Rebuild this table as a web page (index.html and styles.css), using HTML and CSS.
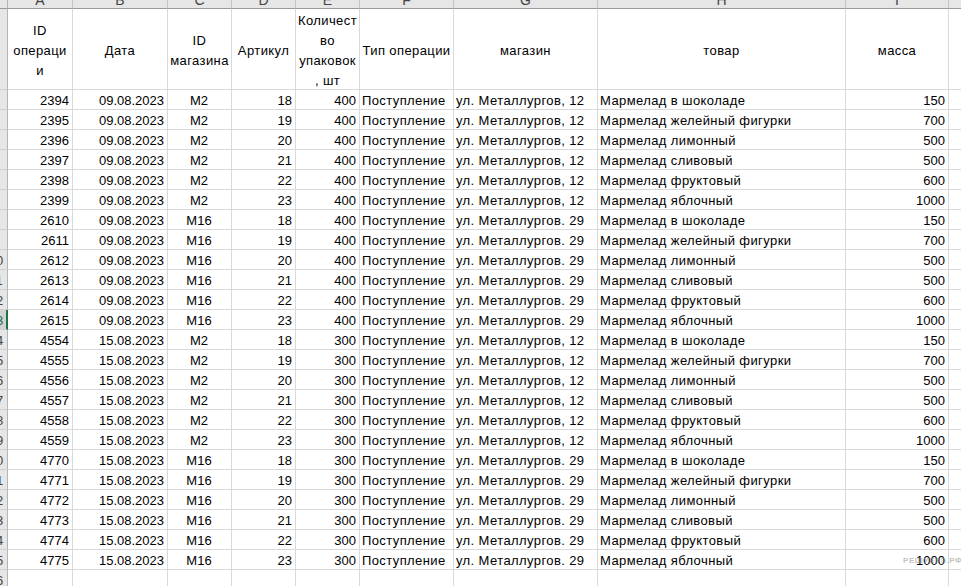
FILE: index.html
```html
<!DOCTYPE html>
<html lang="ru">
<head>
<meta charset="utf-8">
<title>Лист</title>
<link rel="stylesheet" href="styles.css">
</head>
<body>
<div class="sheet">
  <div class="row colhead">
    <div class="corner"></div>
    <div class="ch"><span>A</span></div>
    <div class="ch"><span>B</span></div>
    <div class="ch"><span>C</span></div>
    <div class="ch"><span>D</span></div>
    <div class="ch"><span>E</span></div>
    <div class="ch"><span>F</span></div>
    <div class="ch"><span>G</span></div>
    <div class="ch"><span>H</span></div>
    <div class="ch"><span>I</span></div>
    <div class="ch"><span>J</span></div>
  </div>
  <div class="row head">
    <div class="rh"><span>1</span></div>
    <div class="hc">ID<br>операци<br>и</div>
    <div class="hc">Дата</div>
    <div class="hc">ID<br>магазина</div>
    <div class="hc">Артикул</div>
    <div class="hc">Количест<br>во<br>упаковок<br>, шт</div>
    <div class="hc">Тип операции</div>
    <div class="hc">магазин</div>
    <div class="hc">товар</div>
    <div class="hc">масса</div>
    <div class="hc"></div>
  </div>

  <div class="row"><div class="rh"><span>2</span></div><div class="c r">2394</div><div class="c r">09.08.2023</div><div class="c m">М2</div><div class="c r">18</div><div class="c r">400</div><div class="c">Поступление</div><div class="c">ул. Металлургов, 12</div><div class="c">Мармелад в шоколаде</div><div class="c r">150</div><div class="c"></div></div>
  <div class="row"><div class="rh"><span>3</span></div><div class="c r">2395</div><div class="c r">09.08.2023</div><div class="c m">М2</div><div class="c r">19</div><div class="c r">400</div><div class="c">Поступление</div><div class="c">ул. Металлургов, 12</div><div class="c">Мармелад желейный фигурки</div><div class="c r">700</div><div class="c"></div></div>
  <div class="row"><div class="rh"><span>4</span></div><div class="c r">2396</div><div class="c r">09.08.2023</div><div class="c m">М2</div><div class="c r">20</div><div class="c r">400</div><div class="c">Поступление</div><div class="c">ул. Металлургов, 12</div><div class="c">Мармелад лимонный</div><div class="c r">500</div><div class="c"></div></div>
  <div class="row"><div class="rh"><span>5</span></div><div class="c r">2397</div><div class="c r">09.08.2023</div><div class="c m">М2</div><div class="c r">21</div><div class="c r">400</div><div class="c">Поступление</div><div class="c">ул. Металлургов, 12</div><div class="c">Мармелад сливовый</div><div class="c r">500</div><div class="c"></div></div>
  <div class="row"><div class="rh"><span>6</span></div><div class="c r">2398</div><div class="c r">09.08.2023</div><div class="c m">М2</div><div class="c r">22</div><div class="c r">400</div><div class="c">Поступление</div><div class="c">ул. Металлургов, 12</div><div class="c">Мармелад фруктовый</div><div class="c r">600</div><div class="c"></div></div>
  <div class="row"><div class="rh"><span>7</span></div><div class="c r">2399</div><div class="c r">09.08.2023</div><div class="c m">М2</div><div class="c r">23</div><div class="c r">400</div><div class="c">Поступление</div><div class="c">ул. Металлургов, 12</div><div class="c">Мармелад яблочный</div><div class="c r">1000</div><div class="c"></div></div>
  <div class="row"><div class="rh"><span>8</span></div><div class="c r">2610</div><div class="c r">09.08.2023</div><div class="c m">М16</div><div class="c r">18</div><div class="c r">400</div><div class="c">Поступление</div><div class="c">ул. Металлургов. 29</div><div class="c">Мармелад в шоколаде</div><div class="c r">150</div><div class="c"></div></div>
  <div class="row"><div class="rh"><span>9</span></div><div class="c r">2611</div><div class="c r">09.08.2023</div><div class="c m">М16</div><div class="c r">19</div><div class="c r">400</div><div class="c">Поступление</div><div class="c">ул. Металлургов. 29</div><div class="c">Мармелад желейный фигурки</div><div class="c r">700</div><div class="c"></div></div>
  <div class="row"><div class="rh"><span>10</span></div><div class="c r">2612</div><div class="c r">09.08.2023</div><div class="c m">М16</div><div class="c r">20</div><div class="c r">400</div><div class="c">Поступление</div><div class="c">ул. Металлургов. 29</div><div class="c">Мармелад лимонный</div><div class="c r">500</div><div class="c"></div></div>
  <div class="row"><div class="rh"><span>11</span></div><div class="c r">2613</div><div class="c r">09.08.2023</div><div class="c m">М16</div><div class="c r">21</div><div class="c r">400</div><div class="c">Поступление</div><div class="c">ул. Металлургов. 29</div><div class="c">Мармелад сливовый</div><div class="c r">500</div><div class="c"></div></div>
  <div class="row"><div class="rh"><span>12</span></div><div class="c r">2614</div><div class="c r">09.08.2023</div><div class="c m">М16</div><div class="c r">22</div><div class="c r">400</div><div class="c">Поступление</div><div class="c">ул. Металлургов. 29</div><div class="c">Мармелад фруктовый</div><div class="c r">600</div><div class="c"></div></div>
  <div class="row"><div class="rh sel"><span>13</span></div><div class="c r">2615</div><div class="c r">09.08.2023</div><div class="c m">М16</div><div class="c r">23</div><div class="c r">400</div><div class="c">Поступление</div><div class="c">ул. Металлургов. 29</div><div class="c">Мармелад яблочный</div><div class="c r">1000</div><div class="c"></div></div>
  <div class="row"><div class="rh"><span>14</span></div><div class="c r">4554</div><div class="c r">15.08.2023</div><div class="c m">М2</div><div class="c r">18</div><div class="c r">300</div><div class="c">Поступление</div><div class="c">ул. Металлургов, 12</div><div class="c">Мармелад в шоколаде</div><div class="c r">150</div><div class="c"></div></div>
  <div class="row"><div class="rh"><span>15</span></div><div class="c r">4555</div><div class="c r">15.08.2023</div><div class="c m">М2</div><div class="c r">19</div><div class="c r">300</div><div class="c">Поступление</div><div class="c">ул. Металлургов, 12</div><div class="c">Мармелад желейный фигурки</div><div class="c r">700</div><div class="c"></div></div>
  <div class="row"><div class="rh"><span>16</span></div><div class="c r">4556</div><div class="c r">15.08.2023</div><div class="c m">М2</div><div class="c r">20</div><div class="c r">300</div><div class="c">Поступление</div><div class="c">ул. Металлургов, 12</div><div class="c">Мармелад лимонный</div><div class="c r">500</div><div class="c"></div></div>
  <div class="row"><div class="rh"><span>17</span></div><div class="c r">4557</div><div class="c r">15.08.2023</div><div class="c m">М2</div><div class="c r">21</div><div class="c r">300</div><div class="c">Поступление</div><div class="c">ул. Металлургов, 12</div><div class="c">Мармелад сливовый</div><div class="c r">500</div><div class="c"></div></div>
  <div class="row"><div class="rh"><span>18</span></div><div class="c r">4558</div><div class="c r">15.08.2023</div><div class="c m">М2</div><div class="c r">22</div><div class="c r">300</div><div class="c">Поступление</div><div class="c">ул. Металлургов, 12</div><div class="c">Мармелад фруктовый</div><div class="c r">600</div><div class="c"></div></div>
  <div class="row"><div class="rh"><span>19</span></div><div class="c r">4559</div><div class="c r">15.08.2023</div><div class="c m">М2</div><div class="c r">23</div><div class="c r">300</div><div class="c">Поступление</div><div class="c">ул. Металлургов, 12</div><div class="c">Мармелад яблочный</div><div class="c r">1000</div><div class="c"></div></div>
  <div class="row"><div class="rh"><span>20</span></div><div class="c r">4770</div><div class="c r">15.08.2023</div><div class="c m">М16</div><div class="c r">18</div><div class="c r">300</div><div class="c">Поступление</div><div class="c">ул. Металлургов. 29</div><div class="c">Мармелад в шоколаде</div><div class="c r">150</div><div class="c"></div></div>
  <div class="row"><div class="rh"><span>21</span></div><div class="c r">4771</div><div class="c r">15.08.2023</div><div class="c m">М16</div><div class="c r">19</div><div class="c r">300</div><div class="c">Поступление</div><div class="c">ул. Металлургов. 29</div><div class="c">Мармелад желейный фигурки</div><div class="c r">700</div><div class="c"></div></div>
  <div class="row"><div class="rh"><span>22</span></div><div class="c r">4772</div><div class="c r">15.08.2023</div><div class="c m">М16</div><div class="c r">20</div><div class="c r">300</div><div class="c">Поступление</div><div class="c">ул. Металлургов. 29</div><div class="c">Мармелад лимонный</div><div class="c r">500</div><div class="c"></div></div>
  <div class="row"><div class="rh"><span>23</span></div><div class="c r">4773</div><div class="c r">15.08.2023</div><div class="c m">М16</div><div class="c r">21</div><div class="c r">300</div><div class="c">Поступление</div><div class="c">ул. Металлургов. 29</div><div class="c">Мармелад сливовый</div><div class="c r">500</div><div class="c"></div></div>
  <div class="row"><div class="rh"><span>24</span></div><div class="c r">4774</div><div class="c r">15.08.2023</div><div class="c m">М16</div><div class="c r">22</div><div class="c r">300</div><div class="c">Поступление</div><div class="c">ул. Металлургов. 29</div><div class="c">Мармелад фруктовый</div><div class="c r">600</div><div class="c"></div></div>
  <div class="row"><div class="rh"><span>25</span></div><div class="c r">4775</div><div class="c r">15.08.2023</div><div class="c m">М16</div><div class="c r">23</div><div class="c r">300</div><div class="c">Поступление</div><div class="c">ул. Металлургов. 29</div><div class="c">Мармелад яблочный</div><div class="c r">1000</div><div class="c"></div></div>
  <div class="row"><div class="rh"><span>26</span></div><div class="c"></div><div class="c"></div><div class="c"></div><div class="c"></div><div class="c"></div><div class="c"></div><div class="c"></div><div class="c"></div><div class="c"></div><div class="c"></div></div>

  <div class="watermark">РЕШУЕГЭ.РФ</div>
</div>
</body>
</html>
```

FILE: styles.css
```css
html, body {
  margin: 0;
  padding: 0;
  background: #ffffff;
  overflow: hidden;
}

.sheet {
  position: relative;
  width: 961px;
  height: 586px;
  overflow: hidden;
  font-family: "Liberation Sans", Arial, sans-serif;
  font-size: 13px;
  color: #000;
}

.row {
  display: grid;
  grid-template-columns: 8px 65px 95px 64px 64px 64px 94px 144px 248px 103px 64px;
  height: 20px;
}

.row > div {
  box-sizing: border-box;
  overflow: hidden;
  white-space: nowrap;
}

/* column letter header */
.colhead {
  height: 9px;
  background: #e6e6e6;
}
.corner {
  border-right: 1px solid #b5b5b5;
  border-bottom: 1px solid #9a9a9a;
}
.ch {
  border-right: 1px solid #c4c4c4;
  border-bottom: 1px solid #9a9a9a;
  text-align: center;
  color: #444;
  font-size: 14px;
}
.ch span {
  display: block;
  margin-top: -7px;
  line-height: 14px;
}

/* row number header */
.rh {
  background: #e6e6e6;
  border-right: 1px solid #b5b5b5;
  border-bottom: 1px solid #d0d0d0;
  color: #444;
  font-size: 13px;
}
.rh span {
  display: block;
  width: 24px;
  margin-left: -16px;
  text-align: center;
  padding-top: 3px;
  line-height: 16px;
}
.head .rh span {
  padding-top: 32px;
}
.rh.sel {
  background: #d2d2d2;
  border-right: 2px solid #217346;
  color: #217346;
}

/* header row */
.head {
  height: 81px;
}
.hc {
  border-right: 1px solid #d9d9d9;
  border-bottom: 1px solid #d9d9d9;
  display: flex;
  align-items: center;
  justify-content: center;
  text-align: center;
  line-height: 20px;
  padding-top: 3px;
  letter-spacing: 0.4px;
}

/* data cells */
.c {
  border-right: 1px solid #d9d9d9;
  border-bottom: 1px solid #d9d9d9;
  padding: 3px 3px 0 2px;
  line-height: 16px;
  text-align: left;
  letter-spacing: 0.4px;
}
.c.r {
  text-align: right;
  letter-spacing: 0;
}
.c.m {
  text-align: center;
  letter-spacing: 0;
}

.watermark {
  position: absolute;
  left: 903px;
  top: 556px;
  font-size: 8px;
  font-weight: bold;
  letter-spacing: 0.6px;
  color: rgba(140, 140, 140, 0.55);
}
```
